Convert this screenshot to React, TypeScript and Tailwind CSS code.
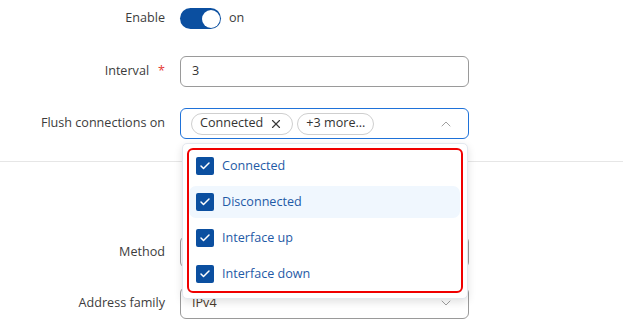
import { Check, X, ChevronUp, ChevronDown } from "lucide-react";

const items = ["Connected", "Disconnected", "Interface up", "Interface down"];

const Label = ({ children, required }: { children: string; required?: boolean }) => (
  <div className="w-[165px] shrink-0 text-right text-[12.6px] text-[#3c3c3c]">
    {children}
    {required && <span className="ml-[9px] text-[#e53935]">*</span>}
  </div>
);

export default function App() {
  return (
    <div className="relative h-[336px] w-[623px] overflow-hidden bg-white font-['Open_Sans',sans-serif]">
      <div className="flex flex-col pt-[8px]">
        {/* Enable */}
        <div className="flex h-[21px] items-center gap-[15px]">
          <Label>Enable</Label>
          <div className="flex items-center gap-[8px]">
            <div className="flex h-[21px] w-[41px] items-center justify-end rounded-full bg-[#0b4fa0] px-[1.5px]">
              <div className="h-[18px] w-[18px] rounded-full bg-white" />
            </div>
            <span className="text-[12.6px] text-[#3c3c3c]">on</span>
          </div>
        </div>

        {/* Interval */}
        <div className="mt-[27px] flex items-center gap-[15px]">
          <Label required>Interval</Label>
          <div className="flex h-[31px] w-[289px] items-center rounded-[6px] border border-[#9a9a9a] px-[11px] text-[12.6px] text-[#333]">
            3
          </div>
        </div>

        {/* Flush connections on */}
        <div className="relative mt-[21px] flex items-center gap-[15px]">
          <Label>Flush connections on</Label>
          <div className="flex h-[31px] w-[289px] items-center rounded-[6px] border border-[#1f72d9] pl-[10px] pr-[14px]">
            <div className="flex items-center gap-[4px]">
              <div className="flex h-[22px] items-center gap-[6px] rounded-full border border-[#cfcfcf] pl-[8px] pr-[9px] text-[12.6px] text-[#333]">
                Connected
                <X size={14} strokeWidth={2} className="text-[#3a3a3a]" />
              </div>
              <div className="flex h-[22px] items-center rounded-full border border-[#cfcfcf] px-[8px] text-[12.6px] text-[#333]">
                +3 more...
              </div>
            </div>
            <ChevronUp size={16} strokeWidth={1.5} className="ml-auto text-[#a0a0a0]" />
          </div>

          {/* dropdown */}
          <div className="absolute left-[182px] top-[35px] z-10 w-[286px] rounded-[5px] border border-[#e3e8ef] bg-white p-[4px] pb-[5px] shadow-[0_3px_8px_rgba(0,0,0,0.12)]">
            <div className="flex flex-col gap-[4px] rounded-[6px] border-2 border-[#f00000] pl-[0px] pr-[1px] pt-[0px] pb-[1px]">
              {items.map((item, i) => (
                <div
                  key={item}
                  className={`flex h-[32px] items-center gap-[8px] rounded-[7px] pl-[7px] ${i === 1 ? "bg-[#f0f7fe]" : ""}`}
                >
                  <div className="flex h-[18px] w-[18px] items-center justify-center rounded-[2px] bg-[#0b4fa0]">
                    <Check size={12} strokeWidth={3} className="text-white" />
                  </div>
                  <span className="text-[12.6px] text-[#1f5aa6]">{item}</span>
                </div>
              ))}
            </div>
          </div>
        </div>

        <div className="mt-[22px] h-px w-full bg-[#e6e6e6]" />

        {/* Method */}
        <div className="mt-[74px] flex items-center gap-[15px]">
          <Label>Method</Label>
          <div className="flex h-[32px] w-[289px] items-center rounded-[6px] border border-[#9a9a9a] px-[11px] text-[12.6px] text-[#333]" />
        </div>

        {/* Address family */}
        <div className="mt-[19px] flex items-center gap-[15px]">
          <Label>Address family</Label>
          <div className="flex h-[32px] w-[289px] items-center rounded-[6px] border border-[#9a9a9a] pl-[11px] pr-[14px] text-[12.6px] text-[#4a3a2a]">
            IPv4
            <ChevronDown size={16} strokeWidth={1.5} className="ml-auto text-[#a0a0a0]" />
          </div>
        </div>
      </div>
    </div>
  );
}
